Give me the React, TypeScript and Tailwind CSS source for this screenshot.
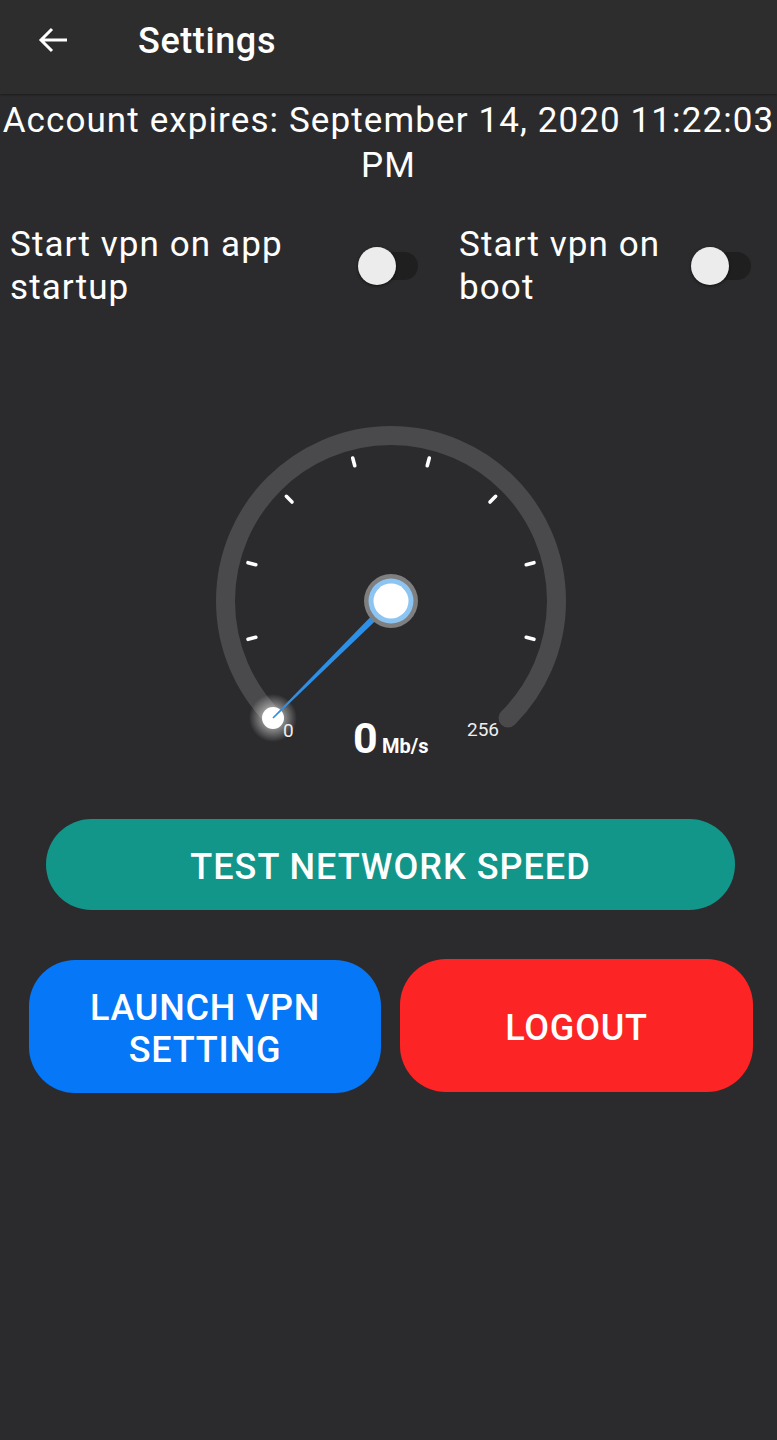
import React from "react";

const font = { fontFamily: "Roboto, 'Noto Sans', sans-serif" };

function Switch() {
  return (
    <div className="relative h-[38px] w-[60px] shrink-0">
      <div className="absolute right-0 top-[5px] h-[28px] w-[52px] rounded-full bg-[#1f1f20]" />
      <div className="absolute left-0 top-0 h-[38px] w-[38px] rounded-full bg-[#ececec] shadow-[0_1px_3px_rgba(0,0,0,0.6)]" />
    </div>
  );
}

function Gauge() {
  const cx = 200;
  const cy = 190;
  const ticks = [1, 2, 3, 4, 5, 6, 7, 8].map((k) => {
    const a = ((225 - 30 * k) * Math.PI) / 180;
    return {
      x1: cx + 140 * Math.cos(a),
      y1: cy - 140 * Math.sin(a),
      x2: cx + 148 * Math.cos(a),
      y2: cy - 148 * Math.sin(a),
    };
  });
  const r = 165.5;
  const o = r * Math.SQRT1_2;
  const sx = cx - o;
  const sy = cy + o;
  const ex = cx + o;
  const ey = cy + o;
  const tx = 82;
  const ty = 307;
  const dx = tx - cx;
  const dy = ty - cy;
  const len = Math.hypot(dx, dy);
  const nx = -dy / len;
  const ny = dx / len;
  const w0 = 3.6;
  const w1 = 0.8;
  const pts = [
    [cx + nx * w0, cy + ny * w0],
    [tx + nx * w1, ty + ny * w1],
    [tx - nx * w1, ty - ny * w1],
    [cx - nx * w0, cy - ny * w0],
  ]
    .map((p) => p.join(","))
    .join(" ");
  return (
    <svg width="400" height="360" viewBox="0 0 400 360" style={font}>
      <defs>
        <radialGradient id="glow" cx="50%" cy="50%" r="50%">
          <stop offset="0%" stopColor="#ffffff" stopOpacity="0.85" />
          <stop offset="45%" stopColor="#ffffff" stopOpacity="0.45" />
          <stop offset="100%" stopColor="#ffffff" stopOpacity="0" />
        </radialGradient>
      </defs>
      <path
        d={`M ${sx} ${sy} A ${r} ${r} 0 1 1 ${ex} ${ey}`}
        fill="none"
        stroke="#4a4a4c"
        strokeWidth="19"
        strokeLinecap="round"
      />
      {ticks.map((t, i) => (
        <line
          key={i}
          x1={t.x1}
          y1={t.y1}
          x2={t.x2}
          y2={t.y2}
          stroke="#ffffff"
          strokeWidth="3.6"
          strokeLinecap="round"
        />
      ))}
      <circle cx={tx} cy={ty} r="24" fill="url(#glow)" />
      <circle cx={tx} cy={ty} r="11" fill="#ffffff" />
      <polygon points={pts} fill="#2e8fe6" />
      <circle cx={cx} cy={cy} r="27" fill="#7f7f80" />
      <circle cx={cx} cy={cy} r="22.5" fill="#8cc5f2" />
      <circle cx={cx} cy={cy} r="17.5" fill="#ffffff" />
      <text x="92" y="326" fontSize="19" fill="#eeeeee">0</text>
      <text x="276" y="325" fontSize="19" fill="#eeeeee">256</text>
      <text x="162" y="342" fontSize="43" fontWeight="700" fill="#ffffff">0</text>
      <text x="191" y="342" fontSize="20" fontWeight="700" fill="#ffffff">Mb/s</text>
    </svg>
  );
}

export default function App() {
  return (
    <div className="min-h-[1440px] w-[777px] bg-[#2b2b2d] text-white" style={font}>
      <header className="flex h-[94px] items-start bg-[#2d2d2e] shadow-[0_1px_2px_rgba(0,0,0,0.35)]">
        <svg className="ml-[38px] mt-[27px] h-[26px] w-[30px]" viewBox="0 0 30 26" fill="none">
          <path d="M29 13H3M14 2L3 13l11 11" stroke="#ffffff" strokeWidth="3" />
        </svg>
        <div className="ml-[70px] mt-[20px] text-[36px] font-medium leading-[42px] tracking-[0.6px]">
          Settings
        </div>
      </header>

      <div className="mt-[4px] text-center text-[35px] leading-[45px] tracking-[1.1px]">
        Account expires: September 14, 2020 11:22:03 PM
      </div>

      <div className="mt-[35px] flex items-center text-[35px] leading-[43px] tracking-[1.1px]">
        <div className="w-[358px] pl-[10px]">Start vpn on app startup</div>
        <Switch />
        <div className="ml-[41px] w-[232px]">Start vpn on boot</div>
        <Switch />
      </div>

      <div className="mt-[102px] pl-[191px]">
        <Gauge />
      </div>

      <button className="ml-[46px] mt-[48px] flex h-[91px] w-[689px] items-center justify-center rounded-full bg-[#12968a] pt-[4px] text-[36px] font-medium tracking-[1px] text-white">
        TEST NETWORK SPEED
      </button>

      <div className="mt-[50px] flex">
        <button className="ml-[29px] flex h-[133px] w-[352px] items-center justify-center rounded-[46px] bg-[#0577f7] pt-[4px] text-center text-[36px] font-medium leading-[42px] tracking-[0.8px] text-white">
          LAUNCH VPN
          <br />
          SETTING
        </button>
        <button className="ml-[19px] -mt-[1px] flex h-[133px] w-[353px] items-center justify-center rounded-[46px] bg-[#fc2424] pt-[4px] text-[36px] font-medium tracking-[0.8px] text-white">
          LOGOUT
        </button>
      </div>
    </div>
  );
}
